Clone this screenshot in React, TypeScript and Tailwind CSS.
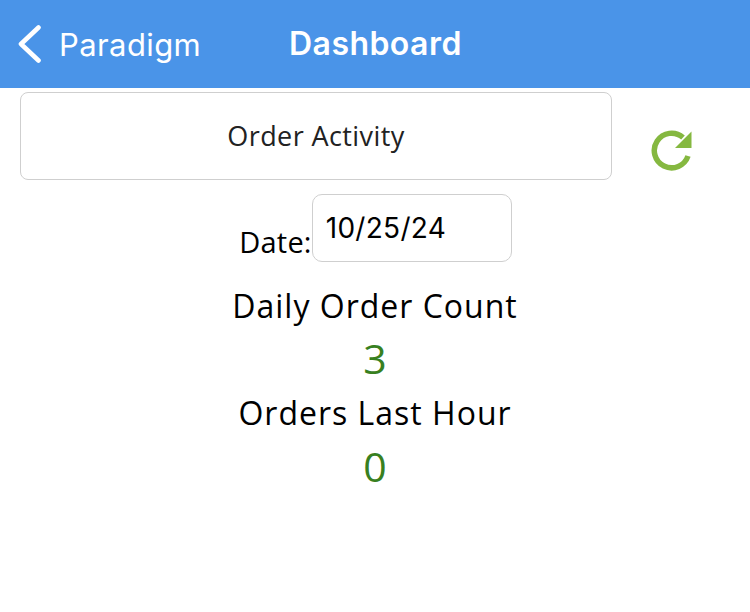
import React from 'react';

const BackIcon = () => (
  <svg width="26" height="38" viewBox="0 0 26 38" fill="none">
    <path d="M21.5 2.5L4 19L21.5 35.5" stroke="white" strokeWidth="4.6" strokeLinecap="round" strokeLinejoin="round" />
  </svg>
);

const RefreshIcon = () => (
  <svg width="44" height="44" viewBox="0 0 44 44" fill="none">
    <path d="M38 27A17.3 17.3 0 1 1 33 8.5" stroke="#85b840" strokeWidth="5.5" />
    <path d="M41.5 2.5V19H25Z" fill="#85b840" />
  </svg>
);

const App: React.FC = () => {
  return (
    <div className="w-[750px] h-[612px] bg-white flex flex-col font-['Open_Sans',sans-serif] text-black overflow-hidden">
      {/* Nav bar */}
      <div className="h-[88px] bg-[#4a94e8] flex items-center text-white font-['Inter',sans-serif]">
        <div className="w-[289px] flex items-center pl-[17px]">
          <BackIcon />
          <span className="ml-4 text-[31px] font-normal leading-none tracking-[0.4px]">Paradigm</span>
        </div>
        <span className="text-[32px] font-semibold leading-none tracking-[0.45px]">Dashboard</span>
      </div>

      {/* Activity selector */}
      <div className="flex items-start pl-5 pt-1">
        <button className="w-[592px] h-[88px] bg-white border border-[#cfcfcf] rounded-[8px] text-[27px] tracking-[0.4px] text-[#222]">
          Order Activity
        </button>
        <div className="ml-[38px] mt-[37px]">
          <RefreshIcon />
        </div>
      </div>

      {/* Date */}
      <div className="flex items-end justify-center mt-[14px] pl-[1px]">
        <span className="text-[29px] leading-none mb-[6px] tracking-[0.2px]">Date:</span>
        <div className="w-[200px] h-[68px] border border-[#cfcfcf] rounded-[10px] flex items-center pl-[13px] font-['Inter',sans-serif] text-[28px] tracking-[0.3px]">
          10/25/24
        </div>
      </div>

      {/* Counts */}
      <div className="flex flex-col items-center mt-[20px]">
        <div className="text-[32px] leading-[48px] tracking-[1px]">Daily Order Count</div>
        <div className="text-[41px] leading-[56px] mb-[3px] text-[#38801f]">3</div>
        <div className="text-[32px] leading-[48px] tracking-[1px]">Orders Last Hour</div>
        <div className="text-[41px] leading-[58px] text-[#38801f]">0</div>
      </div>
    </div>
  );
};

export default App;
